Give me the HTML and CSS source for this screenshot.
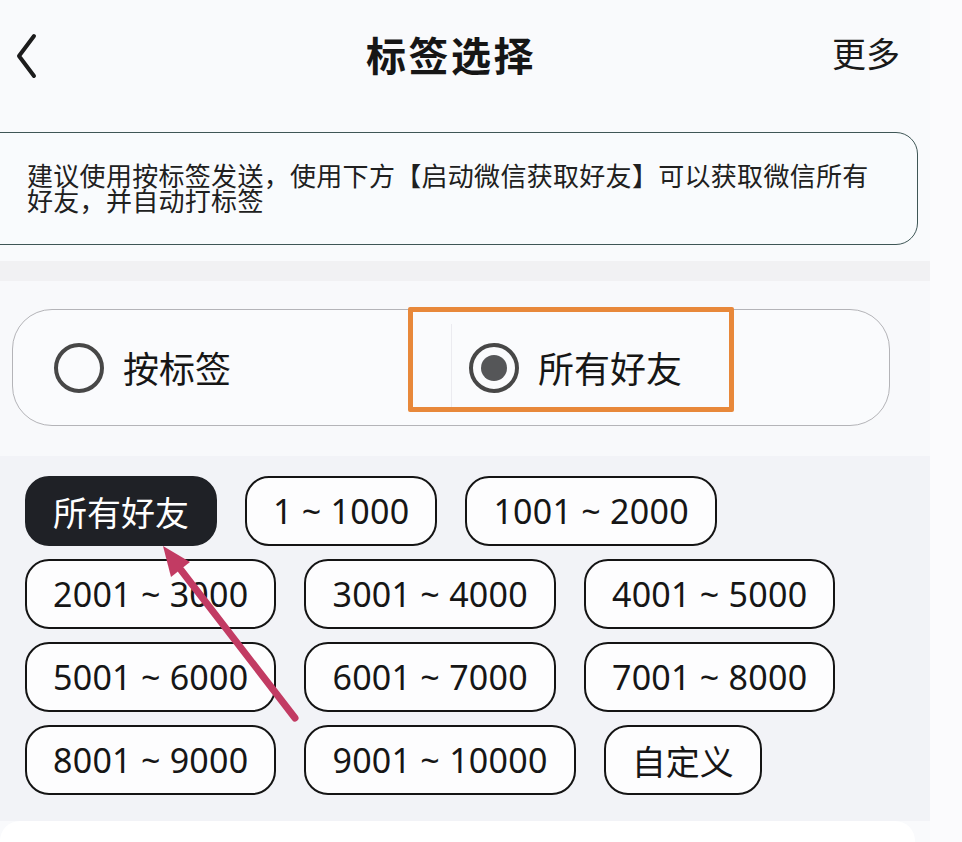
FILE: index.html
```html
<!DOCTYPE html>
<html lang="zh-CN">
<head>
<meta charset="utf-8">
<title>标签选择</title>
<link rel="stylesheet" href="styles.css">
</head>
<body>
<div class="page">
  <div class="column">
    <header class="topbar">
      <div class="back">
        <svg width="26" height="46" viewBox="0 0 26 46"><path d="M20 3 L5 23 L20 43" fill="none" stroke="#1c1c1c" stroke-width="4" stroke-linecap="round" stroke-linejoin="round"/></svg>
      </div>
      <h1 class="title">标签选择</h1>
      <div class="more">更多</div>
    </header>

    <section class="notice">
      <p>建议使用按标签发送，使用下方【启动微信获取好友】可以获取微信所有好友，并自动打标签</p>
    </section>

    <div class="band"></div>

    <section class="mode">
      <div class="segment">
        <label class="opt opt-left">
          <span class="radio"></span>
          <span class="opt-text">按标签</span>
        </label>
        <label class="opt opt-right">
          <span class="radio checked"><span class="dot"></span></span>
          <span class="opt-text">所有好友</span>
        </label>
        <div class="highlight"></div>
      </div>
    </section>

    <section class="chips">
      <div class="chip-row">
        <span class="chip active">所有好友</span>
        <span class="chip">1 ~ 1000</span>
        <span class="chip">1001 ~ 2000</span>
      </div>
      <div class="chip-row">
        <span class="chip">2001 ~ 3000</span>
        <span class="chip">3001 ~ 4000</span>
        <span class="chip">4001 ~ 5000</span>
      </div>
      <div class="chip-row">
        <span class="chip">5001 ~ 6000</span>
        <span class="chip">6001 ~ 7000</span>
        <span class="chip">7001 ~ 8000</span>
      </div>
      <div class="chip-row">
        <span class="chip">8001 ~ 9000</span>
        <span class="chip">9001 ~ 10000</span>
        <span class="chip cjk">自定义</span>
      </div>
    </section>

    <section class="bottom-card"></section>
  </div>

  <svg class="arrow" width="962" height="842" viewBox="0 0 962 842">
    <line x1="295" y1="718" x2="181" y2="570" stroke="#c23b63" stroke-width="7" stroke-linecap="round"/>
    <polygon points="163,546 190,562 171,577" fill="#c23b63"/>
  </svg>
</div>
</body>
</html>
```

FILE: styles.css
```css
* { box-sizing: border-box; }

html, body {
  margin: 0;
  padding: 0;
  background: #fbfbfd;
  font-family: "Noto Sans", "Noto Sans CJK SC", sans-serif;
  color: #151515;
}

.page {
  position: relative;
  width: 962px;
  height: 842px;
  overflow: hidden;
}

.column {
  width: 930px;
  background: #f9fafc;
  height: 842px;
  display: flex;
  flex-direction: column;
}

/* header */
.topbar {
  height: 116px;
  display: grid;
  grid-template-columns: 1fr auto 1fr;
  align-items: center;
  padding: 0 30px 0 14px;
}
.back {
  display: flex;
  align-items: center;
  height: 46px;
  margin-top: -4px;
}
.back svg { display: block; }
.title {
  margin: 0;
  font-size: 40px;
  font-weight: 700;
  letter-spacing: 2.5px;
  color: #161616;
  margin-top: -8px;
  transform: translateX(-6px);
}
.more {
  justify-self: end;
  font-size: 34px;
  color: #1a1a1a;
  margin-top: -12px;
}

/* notice */
.notice {
  margin: 16px 12px 0 -30px;
  height: 113px;
  border: 1.5px solid #3f5656;
  border-radius: 22px;
  background: #f9fbfd;
  padding: 31px 40px 0 56px;
}
.notice p {
  margin: 0;
  font-size: 26px;
  line-height: 25px;
  letter-spacing: 0.3px;
  color: #202020;
}

.band {
  margin-top: 16px;
  height: 20px;
  background: #f1f1f3;
}

/* mode segment */
.mode {
  background: #f8f9fb;
  padding: 28px 40px 30px 12px;
}
.segment {
  position: relative;
  display: flex;
  height: 117px;
  border: 1px solid #b4b4b8;
  border-radius: 40px;
  background: #fafbfd;
}
.opt {
  width: 50%;
  flex: none;
  display: flex;
  align-items: center;
  gap: 19px;
}
.opt-left { padding-left: 41px; }
.opt-right {
  padding-left: 18px;
  position: relative;
}
.opt-right::before {
  content: "";
  position: absolute;
  left: 0;
  top: 14px;
  bottom: 14px;
  width: 1px;
  background: #ebebf0;
}
.radio {
  width: 50px;
  height: 50px;
  border: 4px solid #474747;
  border-radius: 50%;
  display: flex;
  align-items: center;
  justify-content: center;
  flex-shrink: 0;
}
.radio .dot {
  width: 26px;
  height: 26px;
  border-radius: 50%;
  background: #555658;
}
.opt-text {
  font-size: 36px;
  color: #161616;
}
.highlight {
  position: absolute;
  left: 395px;
  top: -3px;
  width: 326px;
  height: 105px;
  border: 5px solid #e8883a;
  border-radius: 2px;
  pointer-events: none;
}

/* chips */
.chips {
  background: #f2f3f7;
  padding: 20px 0 26px 25px;
  display: flex;
  flex-direction: column;
  gap: 13px;
}
.chip-row {
  display: flex;
  gap: 28px;
}
.chip {
  height: 70px;
  padding: 0 26px;
  border: 2px solid #141414;
  border-radius: 24px;
  background: #fdfdfe;
  display: flex;
  align-items: center;
  font-size: 34px;
  letter-spacing: 0.25px;
  color: #161616;
  white-space: nowrap;
}
.chip.cjk {
  letter-spacing: 0;
  padding: 0 26px;
}
.chip.active {
  background: #1f2126;
  border-color: #1f2126;
  color: #ffffff;
  letter-spacing: 0;
}

.bottom-card {
  flex: 1;
  margin-right: 15px;
  background: #ffffff;
  border-radius: 20px 20px 0 0;
}

.arrow {
  position: absolute;
  left: 0;
  top: 0;
  pointer-events: none;
}
```
